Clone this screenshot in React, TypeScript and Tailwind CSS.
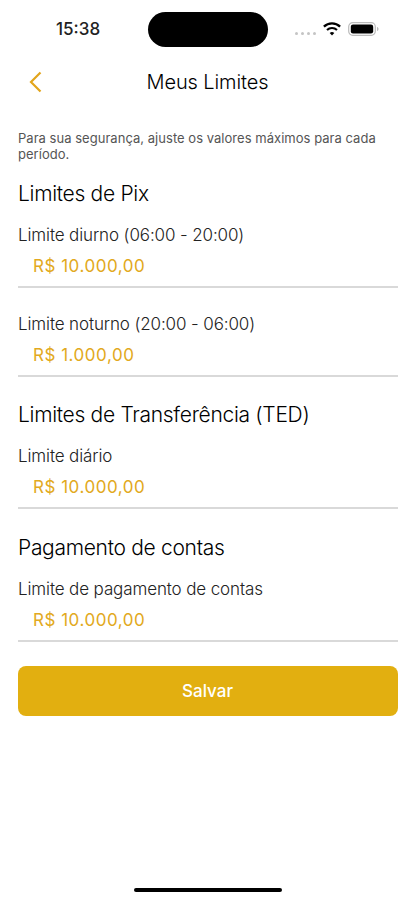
type Limit = {
  label: string
  value: string
}

type LimitGroup = {
  title: string
  limits: Limit[]
}

const groups: LimitGroup[] = [
  {
    title: "Limites de Pix",
    limits: [
      { label: "Limite diurno (06:00 - 20:00)", value: "R$ 10.000,00" },
      { label: "Limite noturno (20:00 - 06:00)", value: "R$ 1.000,00" },
    ],
  },
  {
    title: "Limites de Transferência (TED)",
    limits: [{ label: "Limite diário", value: "R$ 10.000,00" }],
  },
  {
    title: "Pagamento de contas",
    limits: [{ label: "Limite de pagamento de contas", value: "R$ 10.000,00" }],
  },
]

export default function App() {
  return (
    <div className="flex h-[900px] w-full flex-col bg-white font-['Inter',sans-serif] text-black">
      <StatusBar />
      <Header />

      <main className="flex flex-1 flex-col pt-6 pr-[17px] pl-[18px]">
        <p className="text-[13px] leading-4 tracking-[0.03px] text-[#555]">
          Para sua segurança, ajuste os valores máximos para cada período.
        </p>

        <div className="mt-[18px] flex flex-col gap-[24.5px]">
          {groups.map((group) => (
            <section key={group.title}>
              <h2 className="text-[21px] leading-7 font-light tracking-[-0.3px]">
                {group.title}
              </h2>
              <div className="mt-[15px] flex flex-col gap-[23.5px]">
                {group.limits.map((limit) => (
                  <LimitField key={limit.label} {...limit} />
                ))}
              </div>
            </section>
          ))}
        </div>

        <button className="mt-6 h-[50px] w-full rounded-lg bg-[#e2af10] pt-0.5 pr-px text-[17px] font-medium text-white">
          Salvar
        </button>
      </main>

      {/* Home indicator */}
      <div className="flex justify-center pb-2">
        <div className="h-1 w-[148px] rounded-full bg-black" />
      </div>
    </div>
  )
}

function StatusBar() {
  return (
    <div className="flex h-[58px] items-center">
      <div className="w-[148px] pt-0.5 pl-[56px] text-[17px] font-medium text-[#222]">
        15:38
      </div>
      <div className="h-[35px] w-[120px] rounded-full bg-black" />
      <div className="flex flex-1 items-center pl-[27px]">
        <div className="mt-2 flex gap-[3px]">
          <i className="size-[3px] rounded-full bg-[#c4c4c4]" />
          <i className="size-[3px] rounded-full bg-[#c4c4c4]" />
          <i className="size-[3px] rounded-full bg-[#c4c4c4]" />
          <i className="size-[3px] rounded-full bg-[#c4c4c4]" />
        </div>
        <WifiIcon />
        <BatteryIcon />
      </div>
    </div>
  )
}

function Header() {
  return (
    <header className="grid h-12 grid-cols-[60px_1fr_60px] items-center">
      <svg
        className="ml-[27px]"
        width="16"
        height="24"
        viewBox="0 0 16 24"
        fill="none"
        stroke="#e2a51c"
        strokeWidth="2.2"
      >
        <path d="M13.5 2.5 4 12l9.5 9.5" />
      </svg>
      <h1 className="text-center text-[20px] font-light tracking-[-0.1px]">
        Meus Limites
      </h1>
    </header>
  )
}

function LimitField({ label, value }: Limit) {
  return (
    <div className="border-b-2 border-[#d9d9d9] pb-2">
      <div className="text-[17px] leading-6 font-light tracking-[-0.12px] text-[#222]">
        {label}
      </div>
      <div className="mt-[7px] pl-[15px] text-[17px] leading-6 tracking-[0.52px] text-[#e2a920]">
        {value}
      </div>
    </div>
  )
}

function WifiIcon() {
  return (
    <svg className="ml-[7px]" width="18" height="14" viewBox="0 0 18 14" fill="none">
      <path d="M.9 4.7a11.7 11.7 0 0 1 16.2 0" stroke="#000" strokeWidth="2.3" />
      <path d="M4 8a7.2 7.2 0 0 1 10 0" stroke="#000" strokeWidth="2.1" />
      <path d="M9 13.5 6.7 11.1a3.3 3.3 0 0 1 4.6 0Z" fill="#000" />
    </svg>
  )
}

function BatteryIcon() {
  return (
    <svg className="ml-[7px]" width="31" height="14" viewBox="0 0 31 14" fill="none">
      <rect x=".7" y=".7" width="26.6" height="12.6" rx="4" stroke="#bbb" strokeWidth="1.2" />
      <rect x="2.8" y="2.6" width="22.4" height="8.8" rx="2.2" fill="#000" />
      <path d="M29 5v4c1-.4 1.5-1.1 1.5-2S30 5.4 29 5Z" fill="#bbb" />
    </svg>
  )
}
